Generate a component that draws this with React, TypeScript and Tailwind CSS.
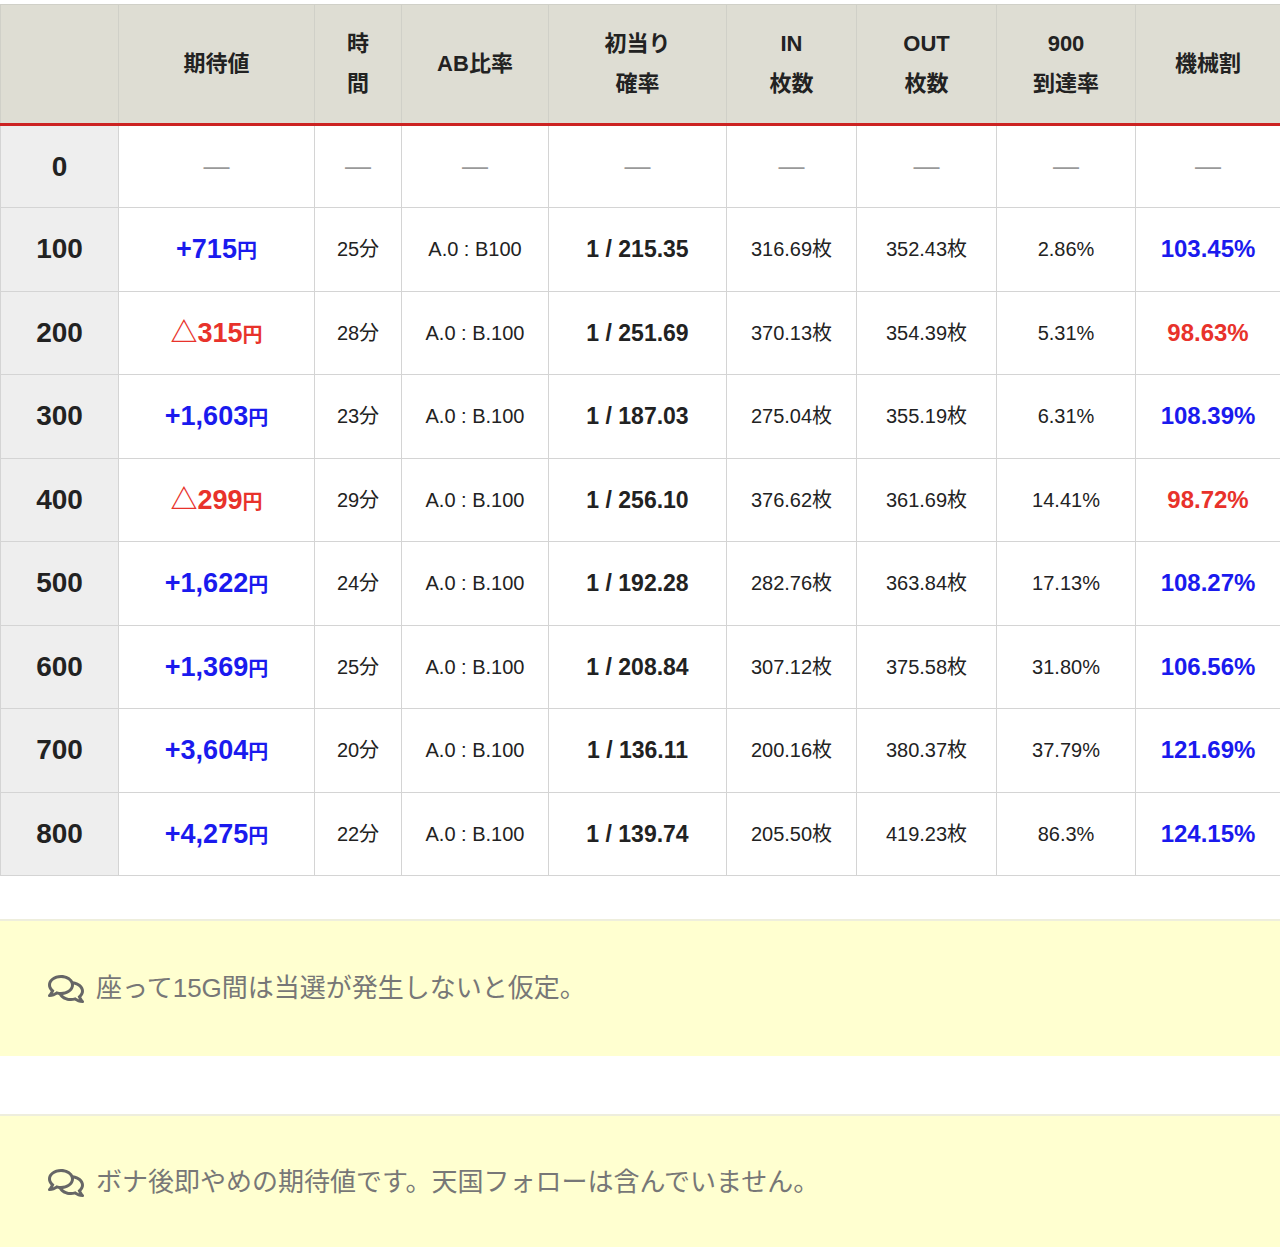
import { FaRegComments } from 'react-icons/fa';

const font = { fontFamily: '"Liberation Sans", Arial, "Noto Sans CJK JP", sans-serif' };

type Row = { g: string; ev: string; plus: boolean; t: string; ab: string; p: string; inn: string; out: string; r900: string; m: string };

const rows: Row[] = [
  { g: '100', ev: '+715', plus: true, t: '25分', ab: 'A.0 : B100', p: '1 / 215.35', inn: '316.69枚', out: '352.43枚', r900: '2.86%', m: '103.45%' },
  { g: '200', ev: '△315', plus: false, t: '28分', ab: 'A.0 : B.100', p: '1 / 251.69', inn: '370.13枚', out: '354.39枚', r900: '5.31%', m: '98.63%' },
  { g: '300', ev: '+1,603', plus: true, t: '23分', ab: 'A.0 : B.100', p: '1 / 187.03', inn: '275.04枚', out: '355.19枚', r900: '6.31%', m: '108.39%' },
  { g: '400', ev: '△299', plus: false, t: '29分', ab: 'A.0 : B.100', p: '1 / 256.10', inn: '376.62枚', out: '361.69枚', r900: '14.41%', m: '98.72%' },
  { g: '500', ev: '+1,622', plus: true, t: '24分', ab: 'A.0 : B.100', p: '1 / 192.28', inn: '282.76枚', out: '363.84枚', r900: '17.13%', m: '108.27%' },
  { g: '600', ev: '+1,369', plus: true, t: '25分', ab: 'A.0 : B.100', p: '1 / 208.84', inn: '307.12枚', out: '375.58枚', r900: '31.80%', m: '106.56%' },
  { g: '700', ev: '+3,604', plus: true, t: '20分', ab: 'A.0 : B.100', p: '1 / 136.11', inn: '200.16枚', out: '380.37枚', r900: '37.79%', m: '121.69%' },
  { g: '800', ev: '+4,275', plus: true, t: '22分', ab: 'A.0 : B.100', p: '1 / 139.74', inn: '205.50枚', out: '419.23枚', r900: '86.3%', m: '124.15%' },
];

const widths = [118, 196, 87, 147, 178, 130, 140, 139, 145];
const headers = [[''], ['期待値'], ['時', '間'], ['AB比率'], ['初当り', '確率'], ['IN', '枚数'], ['OUT', '枚数'], ['900', '到達率'], ['機械割']];

const td = 'border border-[#d4d4d4] text-center align-middle';

function Note({ text }: { text: string }) {
  return (
    <div className="flex h-full items-center gap-3 border-t-2 border-[#eeeedd] bg-[#ffffd0] px-12 text-[26px] text-[#777]">
      <FaRegComments className="h-9 w-9 shrink-0 text-[#666]" />
      <span>{text}</span>
    </div>
  );
}

export default function App() {
  return (
    <div className="w-[1280px] bg-white pt-1" style={font}>
      <table className="w-full table-fixed border-collapse">
        <colgroup>
          {widths.map((w, i) => (
            <col key={i} style={{ width: w }} />
          ))}
        </colgroup>
        <thead>
          <tr className="h-[120px] bg-[#deddd3]">
            {headers.map((h, i) => (
              <th key={i} className="border border-b-[3px] border-[#d0d0c8] border-b-[#cc2222] text-[22px] font-bold leading-[40px] text-[#222]">
                {h.map((l, j) => (
                  <div key={j}>{l}</div>
                ))}
              </th>
            ))}
          </tr>
        </thead>
        <tbody>
          <tr className="h-[83px]">
            <td className={`${td} bg-[#eeeeee] text-[28px] font-bold text-[#222]`}>0</td>
            {widths.slice(1).map((_, i) => (
              <td key={i} className={`${td} text-[26px] text-[#999]`}>—</td>
            ))}
          </tr>
          {rows.map((r) => (
            <tr key={r.g} className="h-[83.5px] text-[#222]">
              <td className={`${td} bg-[#eeeeee] text-[28px] font-bold`}>{r.g}</td>
              <td className={`${td} text-[27px] font-bold ${r.plus ? 'text-[#1a1aee]' : 'text-[#e8322b]'}`}>
                {r.ev}
                <span className="text-[20px]">円</span>
              </td>
              <td className={`${td} text-[20px]`}>{r.t}</td>
              <td className={`${td} text-[20px]`}>{r.ab}</td>
              <td className={`${td} text-[23px] font-bold`}>{r.p}</td>
              <td className={`${td} text-[20px]`}>{r.inn}</td>
              <td className={`${td} text-[20px]`}>{r.out}</td>
              <td className={`${td} text-[20px]`}>{r.r900}</td>
              <td className={`${td} text-[24px] font-bold ${r.plus ? 'text-[#1a1aee]' : 'text-[#e8322b]'}`}>{r.m}</td>
            </tr>
          ))}
        </tbody>
      </table>
      <div className="h-[43px]" />
      <div className="h-[137px]">
        <Note text="座って15G間は当選が発生しないと仮定。" />
      </div>
      <div className="h-[58px]" />
      <div className="h-[135px]">
        <Note text="ボナ後即やめの期待値です。天国フォローは含んでいません。" />
      </div>
    </div>
  );
}
